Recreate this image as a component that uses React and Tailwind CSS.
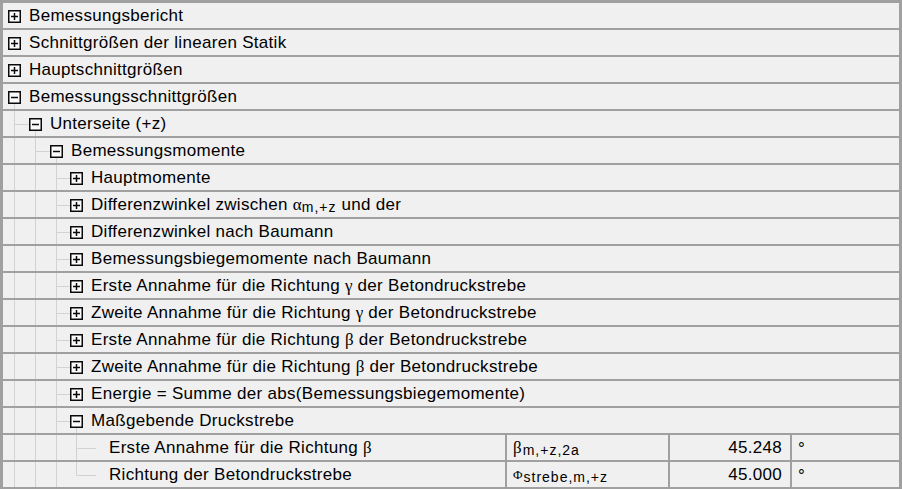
import React from 'react';

// pixel column (inside a row) of the tree line for each level
const C = [11, 32, 53, 73];
const LINE = '#d2d2d2';

const rows = [
    { level: 0, state: 'plus', text: 'Bemessungsbericht' },
    { level: 0, state: 'plus', text: 'Schnittgrößen der linearen Statik' },
    { level: 0, state: 'plus', text: 'Hauptschnittgrößen' },
    { level: 0, state: 'minus', text: 'Bemessungsschnittgrößen' },
    { level: 1, state: 'minus', text: 'Unterseite (+z)' },
    { level: 2, state: 'minus', text: 'Bemessungsmomente' },
    { level: 3, state: 'plus', text: 'Hauptmomente' },
    { level: 3, state: 'plus', text: 'alpha' },
    { level: 3, state: 'plus', text: 'Differenzwinkel nach Baumann' },
    { level: 3, state: 'plus', text: 'Bemessungsbiegemomente nach Baumann' },
    { level: 3, state: 'plus', text: ['Erste Annahme für die Richtung ', 'γ', ' der Betondruckstrebe'] },
    { level: 3, state: 'plus', text: ['Zweite Annahme für die Richtung ', 'γ', ' der Betondruckstrebe'] },
    { level: 3, state: 'plus', text: ['Erste Annahme für die Richtung ', 'β', ' der Betondruckstrebe'] },
    { level: 3, state: 'plus', text: ['Zweite Annahme für die Richtung ', 'β', ' der Betondruckstrebe'] },
    { level: 3, state: 'plus', text: 'Energie = Summe der abs(Bemessungsbiegemomente)' },
    { level: 3, state: 'minus', text: 'Maßgebende Druckstrebe' },
];

const leaves = [
    { text: 'Erste Annahme für die Richtung β', sym: 'β', symSize: 'text-[17px]', sub: 'm,+z,2a', value: '45.248', unit: '°' },
    { text: 'Richtung der Betondruckstrebe', sym: 'Φ', symSize: 'text-[13px]', sub: 'strebe,m,+z', value: '45.000', unit: '°', last: true },
];

function TreeGlyph({ level, state, leaf, last }) {
    const w = leaf ? 94 : C[level] + 7;
    const cy = 13.5;
    const verticals = [];
    const n = leaf ? 4 : level;
    for (let i = 0; i < n; i++) {
        const isParent = i === n - 1;
        verticals.push(
            <line key={i} x1={C[i] + 0.5} y1={0} x2={C[i] + 0.5} y2={isParent && last ? cy : 25} stroke={LINE} />
        );
    }
    const bx = leaf ? null : C[level] - 6;
    return (
        <svg width={w} height={25} className="block shrink-0">
            {verticals}
            {n > 0 && (
                <line x1={C[n - 1] + 0.5} y1={cy} x2={leaf ? 93 : bx} y2={cy} stroke={LINE} />
            )}
            {!leaf && state === 'minus' && (
                <line x1={C[level] + 0.5} y1={20} x2={C[level] + 0.5} y2={25} stroke={LINE} />
            )}
            {!leaf && (
                <g stroke="#0a0a0a" strokeWidth={1.5}>
                    <rect x={bx + 0.75} y={7.75} width={11.5} height={11.5} fill="#fbfbfb" />
                    <line x1={bx + 3} y1={cy} x2={bx + 10} y2={cy} />
                    {state === 'plus' && <line x1={bx + 6.5} y1={10} x2={bx + 6.5} y2={17} />}
                </g>
            )}
        </svg>
    );
}

function Greek({ children, className = 'text-[17px]' }) {
    return <span className={`font-['Liberation_Serif',serif] tracking-normal ${className}`}>{children}</span>;
}

function Label({ text }) {
    if (text === 'alpha') {
        return (
            <span>
                Differenzwinkel zwischen <Greek>α</Greek>
                <span className="text-[14px] tracking-[1px] align-[-2px]">m,+z</span> und der
            </span>
        );
    }
    if (Array.isArray(text)) {
        return (
            <span>
                {text[0]}
                <Greek>{text[1]}</Greek>
                {text[2]}
            </span>
        );
    }
    return <span>{text}</span>;
}

export default function App() {
    return (
        <div className="w-[902px] h-[489px] overflow-hidden bg-[#f0f0f0] border-[3px] border-b-0 border-[#a0a0a0] text-[17px] tracking-[0.3px] text-black font-['Liberation_Sans',Arial,sans-serif] leading-none">
            {rows.map((r, i) => (
                <div key={i} className="flex items-center h-[27px] border-b-2 border-[#a0a0a0]">
                    <TreeGlyph level={r.level} state={r.state} />
                    <div className="ml-[8px] whitespace-nowrap">
                        <Label text={r.text} />
                    </div>
                </div>
            ))}
            {leaves.map((l, i) => (
                <div key={i} className="flex h-[27px] border-b-2 border-[#a0a0a0]">
                    <div className="flex items-center w-[502px] shrink-0">
                        <TreeGlyph leaf last={l.last} />
                        <span className="ml-[12px] whitespace-nowrap">
                            {l.text.endsWith('β') ? (
                                <>
                                    {l.text.slice(0, -1)}
                                    <Greek>β</Greek>
                                </>
                            ) : (
                                l.text
                            )}
                        </span>
                    </div>
                    <div className="flex items-center w-[163px] shrink-0 border-l-2 border-[#a0a0a0] pl-[6px] whitespace-nowrap">
                        <Greek className={l.symSize}>{l.sym}</Greek>
                        <span className="text-[14px] tracking-[1px] relative top-[2px] ml-[1px]">{l.sub}</span>
                    </div>
                    <div className="flex items-center justify-end w-[122px] shrink-0 border-l-2 border-[#a0a0a0] pr-[8px]">
                        {l.value}
                    </div>
                    <div className="flex items-start pt-[5px] flex-1 border-l-2 border-[#a0a0a0] pl-[6px]">
                        {l.unit}
                    </div>
                </div>
            ))}
        </div>
    );
}
